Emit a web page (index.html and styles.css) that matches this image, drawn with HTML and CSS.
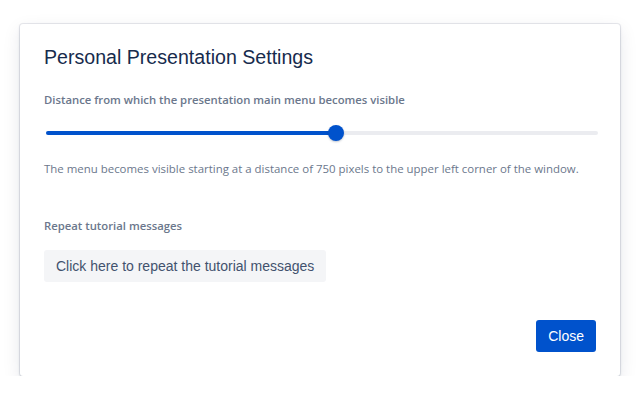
FILE: index.html
```html
<!doctype html>
<html lang="en">

<head>
    <meta charset="UTF-8" />
    <meta name="viewport" content="width=device-width, initial-scale=1.0" />
    <title>Personal Presentation Settings</title>
    <link rel="stylesheet" href="styles.css">
</head>

<body>
    <div class="dialog">
        <div class="dialog-title">Personal Presentation Settings</div>

        <div class="field-label label-first">Distance from which the presentation main menu becomes visible</div>
        <div class="slider">
            <div class="track">
                <div class="fill" style="width: 52.5%"></div>
                <div class="thumb" style="left: 52.5%"></div>
            </div>
        </div>
        <div class="help">The menu becomes visible starting at a distance of 750 pixels to the upper left corner of the window.</div>

        <div class="field-label label-second">Repeat tutorial messages</div>
        <div class="row">
            <button class="btn btn-subtle">Click here to repeat the tutorial messages</button>
        </div>

        <div class="footer">
            <button class="btn btn-primary">Close</button>
        </div>
    </div>
</body>

</html>
```

FILE: styles.css
```css
html,
body {
    margin: 0;
    padding: 0;
    background: #ffffff;
}

body {
    display: flex;
    align-items: flex-start;
    padding: 24px 0 0 20px;
}

.dialog {
    width: 600px;
    box-sizing: border-box;
    padding: 21px 24px 24px;
    background: #ffffff;
    border-radius: 3px;
    box-shadow: 0 0 0 1px rgba(9, 30, 66, 0.08), 0 1px 3px rgba(9, 30, 66, 0.15), 0 6px 18px rgba(9, 30, 66, 0.1);
    display: flex;
    flex-direction: column;
}

.dialog-title {
    font-family: "Liberation Sans", Arial, sans-serif;
    font-size: 19.6px;
    line-height: 24px;
    color: #172b4d;
}

.field-label {
    font-family: "Open Sans", "Liberation Sans", sans-serif;
    font-weight: 600;
    font-size: 11.3px;
    line-height: 16px;
    color: #6b778c;
}

.label-first {
    margin-top: 23px;
}

.label-second {
    margin-top: 41px;
}

.slider {
    margin: 17px -2px 0 0;
    height: 16px;
    display: flex;
    align-items: center;
    padding: 0 0 0 2px;
}

.track {
    position: relative;
    flex: 1;
    height: 4px;
    border-radius: 2px;
    background: #ebecf0;
}

.fill {
    height: 4px;
    border-radius: 2px;
    background: #0052cc;
}

.thumb {
    position: absolute;
    top: -6px;
    width: 16px;
    height: 16px;
    margin-left: -8px;
    border-radius: 50%;
    background: #0052cc;
    box-shadow: 0 1px 2px rgba(9, 30, 66, 0.25);
}

.help {
    margin-top: 20px;
    font-family: "Open Sans", "Liberation Sans", sans-serif;
    font-size: 11.45px;
    line-height: 16px;
    color: #6b778c;
}

.row {
    display: flex;
    margin-top: 16px;
}

.btn {
    border: none;
    height: 32px;
    padding: 0 12px;
    border-radius: 3px;
    font-family: "Liberation Sans", Arial, sans-serif;
    font-size: 14px;
    line-height: 32px;
    cursor: pointer;
}

.btn-subtle {
    background: #f4f5f7;
    color: #42526e;
}

.btn-primary {
    background: #0052cc;
    color: #ffffff;
}

.footer {
    display: flex;
    justify-content: flex-end;
    margin-top: 38px;
}
```
